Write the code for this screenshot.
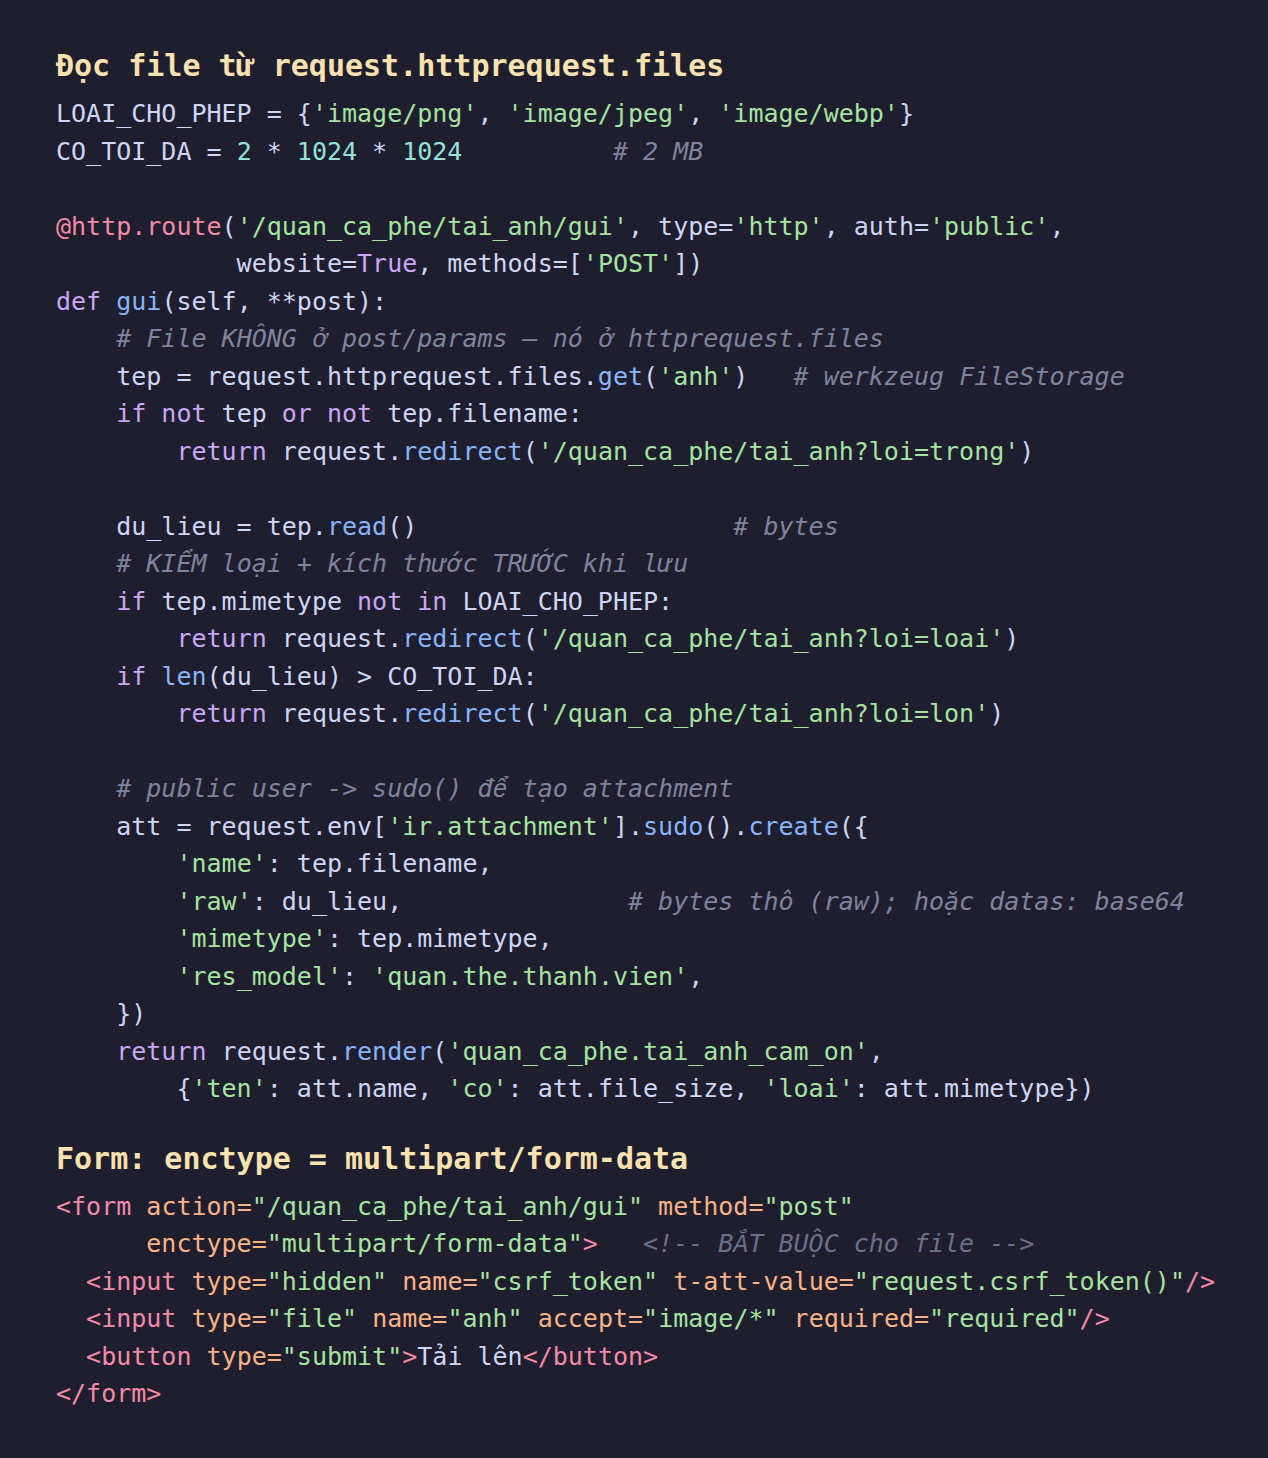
import React from "react";

type Tok = [string, string];

const cls: Record<string, string> = {
  p: "text-[#cdd6f4]",
  k: "text-[#cba6f7]",
  s: "text-[#a6e3a1]",
  f: "text-[#89b4fa]",
  n: "text-[#94e2d5]",
  m: "text-[#7f849c] italic",
  h: "text-[#6c7086] italic",
  d: "text-[#f38ba8]",
  t: "text-[#f38ba8]",
  a: "text-[#fab387]",
};

const sp = (n: number) => " ".repeat(n);

const py: Tok[][] = [
  [["p", "LOAI_CHO_PHEP = {"], ["s", "'image/png'"], ["p", ", "], ["s", "'image/jpeg'"], ["p", ", "], ["s", "'image/webp'"], ["p", "}"]],
  [["p", "CO_TOI_DA = "], ["n", "2"], ["p", " * "], ["n", "1024"], ["p", " * "], ["n", "1024"], ["p", sp(10)], ["m", "# 2 MB"]],
  [],
  [["d", "@http.route"], ["p", "("], ["s", "'/quan_ca_phe/tai_anh/gui'"], ["p", ", type="], ["s", "'http'"], ["p", ", auth="], ["s", "'public'"], ["p", ","]],
  [["p", sp(12) + "website="], ["k", "True"], ["p", ", methods=["], ["s", "'POST'"], ["p", "])"]],
  [["k", "def"], ["p", " "], ["f", "gui"], ["p", "(self, **post):"]],
  [["p", sp(4)], ["m", "# File KHÔNG ở post/params – nó ở httprequest.files"]],
  [["p", sp(4) + "tep = request.httprequest.files."], ["f", "get"], ["p", "("], ["s", "'anh'"], ["p", ")" + sp(3)], ["m", "# werkzeug FileStorage"]],
  [["p", sp(4)], ["k", "if not"], ["p", " tep "], ["k", "or not"], ["p", " tep.filename:"]],
  [["p", sp(8)], ["k", "return"], ["p", " request."], ["f", "redirect"], ["p", "("], ["s", "'/quan_ca_phe/tai_anh?loi=trong'"], ["p", ")"]],
  [],
  [["p", sp(4) + "du_lieu = tep."], ["f", "read"], ["p", "()" + sp(21)], ["m", "# bytes"]],
  [["p", sp(4)], ["m", "# KIỂM loại + kích thước TRƯỚC khi lưu"]],
  [["p", sp(4)], ["k", "if"], ["p", " tep.mimetype "], ["k", "not in"], ["p", " LOAI_CHO_PHEP:"]],
  [["p", sp(8)], ["k", "return"], ["p", " request."], ["f", "redirect"], ["p", "("], ["s", "'/quan_ca_phe/tai_anh?loi=loai'"], ["p", ")"]],
  [["p", sp(4)], ["k", "if"], ["p", " "], ["f", "len"], ["p", "(du_lieu) > CO_TOI_DA:"]],
  [["p", sp(8)], ["k", "return"], ["p", " request."], ["f", "redirect"], ["p", "("], ["s", "'/quan_ca_phe/tai_anh?loi=lon'"], ["p", ")"]],
  [],
  [["p", sp(4)], ["m", "# public user -> sudo() để tạo attachment"]],
  [["p", sp(4) + "att = request.env["], ["s", "'ir.attachment'"], ["p", "]."], ["f", "sudo"], ["p", "()."], ["f", "create"], ["p", "({"]],
  [["p", sp(8)], ["s", "'name'"], ["p", ": tep.filename,"]],
  [["p", sp(8)], ["s", "'raw'"], ["p", ": du_lieu," + sp(15)], ["m", "# bytes thô (raw); hoặc datas: base64"]],
  [["p", sp(8)], ["s", "'mimetype'"], ["p", ": tep.mimetype,"]],
  [["p", sp(8)], ["s", "'res_model'"], ["p", ": "], ["s", "'quan.the.thanh.vien'"], ["p", ","]],
  [["p", sp(4) + "})"]],
  [["p", sp(4)], ["k", "return"], ["p", " request."], ["f", "render"], ["p", "("], ["s", "'quan_ca_phe.tai_anh_cam_on'"], ["p", ","]],
  [["p", sp(8) + "{"], ["s", "'ten'"], ["p", ": att.name, "], ["s", "'co'"], ["p", ": att.file_size, "], ["s", "'loai'"], ["p", ": att.mimetype})"]],
];

const html: Tok[][] = [
  [["t", "<form"], ["p", " "], ["a", "action="], ["s", "\"/quan_ca_phe/tai_anh/gui\""], ["p", " "], ["a", "method="], ["s", "\"post\""]],
  [["p", sp(6)], ["a", "enctype="], ["s", "\"multipart/form-data\""], ["t", ">"], ["p", sp(3)], ["h", "<!-- BẮT BUỘC cho file -->"]],
  [["p", sp(2)], ["t", "<input"], ["p", " "], ["a", "type="], ["s", "\"hidden\""], ["p", " "], ["a", "name="], ["s", "\"csrf_token\""], ["p", " "], ["a", "t-att-value="], ["s", "\"request.csrf_token()\""], ["t", "/>"]],
  [["p", sp(2)], ["t", "<input"], ["p", " "], ["a", "type="], ["s", "\"file\""], ["p", " "], ["a", "name="], ["s", "\"anh\""], ["p", " "], ["a", "accept="], ["s", "\"image/*\""], ["p", " "], ["a", "required="], ["s", "\"required\""], ["t", "/>"]],
  [["p", sp(2)], ["t", "<button"], ["p", " "], ["a", "type="], ["s", "\"submit\""], ["t", ">"], ["p", "Tải lên"], ["t", "</button>"]],
  [["t", "</form>"]],
];

const SPECIAL = /([ởỂểẮ])/;

function renderText(txt: string) {
  const parts = txt.split(SPECIAL);
  return parts.map((part, i) =>
    i % 2 === 1 ? (
      <span key={i} className="font-['Liberation_Mono',monospace] inline-block w-[15.05px]">
        {part}
      </span>
    ) : (
      <React.Fragment key={i}>{part}</React.Fragment>
    )
  );
}

function Code({ lines }: { lines: Tok[][] }) {
  return (
    <div className="text-[25px] leading-[37.5px] whitespace-pre">
      {lines.map((line, i) => (
        <div key={i} className="h-[37.5px]">
          {line.map(([k, txt], j) => (
            <span key={j} className={cls[k]}>
              {renderText(txt)}
            </span>
          ))}
        </div>
      ))}
    </div>
  );
}

export default function App() {
  return (
    <div className="min-h-screen w-full bg-[#1e1e2e] font-['DejaVu_Sans_Mono',monospace] px-[56px] pt-[43px] pb-[46px]">
      <h2 className="text-[30px] leading-[45px] font-bold text-[#f9e2af] mb-[7px] whitespace-pre">
        Đọc file từ request.httprequest.files
      </h2>
      <Code lines={py} />
      <h2 className="text-[30px] leading-[45px] font-bold text-[#f9e2af] mt-[28px] mb-[7px] whitespace-pre">
        Form: enctype = multipart/form-data
      </h2>
      <Code lines={html} />
    </div>
  );
}
